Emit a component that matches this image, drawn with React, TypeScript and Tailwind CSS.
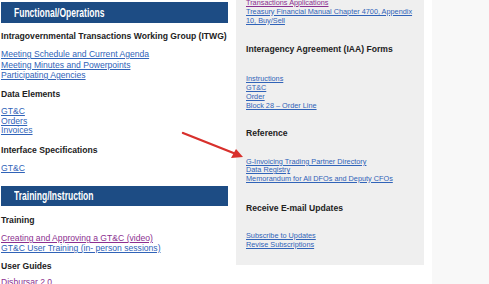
import React from "react";

const Link = ({ children, visited = false }: { children: React.ReactNode; visited?: boolean }) => (
  <a className={`block underline whitespace-nowrap ${visited ? "text-[#8b2f8f]" : "text-[#3063b8]"}`}>{children}</a>
);

const Bar = ({ children, className = "" }: { children: React.ReactNode; className?: string }) => (
  <div className={`w-[227px] bg-[#1d4c84] flex items-center pl-[13px] ${className}`}>
    <span className="inline-block origin-left scale-x-[0.71] text-white font-bold text-[12px] leading-none whitespace-nowrap">{children}</span>
  </div>
);

const H = ({ children, className = "" }: { children: React.ReactNode; className?: string }) => (
  <div className={`font-bold text-[8.6px] text-[#222] leading-[10px] whitespace-nowrap ${className}`}>{children}</div>
);

export default function App() {
  return (
    <div className="relative w-[489px] h-[284px] overflow-hidden bg-white flex" style={{ fontFamily: '"Liberation Sans", Arial, sans-serif' }}>
      {/* Left column */}
      <div className="w-[236px] pl-[1px] pt-[2px] shrink-0">
        <Bar className="h-[21px]">Functional/Operations</Bar>
        <H className="mt-[8px]">Intragovernmental Transactions Working Group (ITWG)</H>
        <div className="mt-[8px] text-[8.6px] leading-[10.5px]">
          <Link>Meeting Schedule and Current Agenda</Link>
          <Link>Meeting Minutes and Powerpoints</Link>
          <Link>Participating Agencies</Link>
        </div>
        <H className="mt-[8.5px]">Data Elements</H>
        <div className="mt-[8px] text-[8.6px] leading-[9.7px]">
          <Link>GT&amp;C</Link>
          <Link>Orders</Link>
          <Link>Invoices</Link>
        </div>
        <H className="mt-[9px]">Interface Specifications</H>
        <div className="mt-[8px] text-[8.6px] leading-[10px]">
          <Link>GT&amp;C</Link>
        </div>
        <Bar className="mt-[13px] h-[20px]">Training/Instruction</Bar>
        <H className="mt-[9px]">Training</H>
        <div className="mt-[8px] text-[8.6px] leading-[10px]">
          <Link visited>Creating and Approving a GT&amp;C (video)</Link>
          <Link>GT&amp;C User Training (in- person sessions)</Link>
        </div>
        <H className="mt-[8px]">User Guides</H>
        <div className="mt-[6px] text-[8.6px] leading-[10px]">
          <Link visited>Disbursar 2.0</Link>
        </div>
      </div>

      {/* Middle gray panel */}
      <div className="w-[188px] h-[265px] shrink-0 bg-[#efefef] pl-[10px] overflow-hidden">
        <div className="-mt-[2.5px] text-[7.3px] leading-[9px]">
          <Link visited>Transactions Applications</Link>
          <Link>Treasury Financial Manual Chapter 4700, Appendix</Link>
          <Link>10, Buy/Sell</Link>
        </div>
        <H className="mt-[19px]">Interagency Agreement (IAA) Forms</H>
        <div className="mt-[20px] text-[7.3px] leading-[9px]">
          <Link>Instructions</Link>
          <Link>GT&amp;C</Link>
          <Link>Order</Link>
          <Link>Block 28 – Order Line</Link>
        </div>
        <H className="mt-[18px]">Reference</H>
        <div className="mt-[20px] text-[7.3px] leading-[8.5px]">
          <Link>G-Invoicing Trading Partner Directory</Link>
          <Link>Data Registry</Link>
          <Link>Memorandum for All DFOs and Deputy CFOs</Link>
        </div>
        <H className="mt-[19.5px]">Receive E-mail Updates</H>
        <div className="mt-[18.5px] text-[7.3px] leading-[9px]">
          <Link>Subscribe to Updates</Link>
          <Link>Revise Subscriptions</Link>
        </div>
      </div>

      <div className="w-[8px] shrink-0 bg-white" />
      <div className="flex-1 h-full bg-[#f8f8f8]" />

      {/* Red arrow */}
      <svg className="absolute left-0 top-0 pointer-events-none" width="489" height="284">
        <line x1="183" y1="133" x2="236" y2="154" stroke="#d8302c" strokeWidth="2.4" strokeLinecap="round" />
        <polygon points="243,157 231,158 236,149" fill="#d8302c" />
      </svg>
    </div>
  );
}
